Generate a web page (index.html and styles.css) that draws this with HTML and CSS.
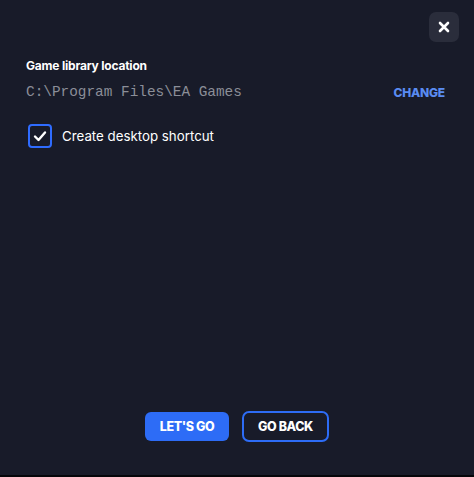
FILE: index.html
```html
<!DOCTYPE html>
<html lang="en">

<head>
  <title>Install options</title>
  <link rel="stylesheet" href="styles.css">
</head>

<body>
  <div class="dialog">
    <div class="top">
      <button class="close" aria-label="Close">
        <svg width="12" height="12" viewBox="0 0 12 12">
          <path d="M2 2 L10 10 M10 2 L2 10" stroke="#fff" stroke-width="2.6" stroke-linecap="round" />
        </svg>
      </button>
    </div>

    <div class="content">
      <div class="label">Game library location</div>
      <div class="location">
        <span class="path">C:\Program Files\EA Games</span>
        <a class="change" href="#">CHANGE</a>
      </div>

      <label class="option">
        <span class="checkbox">
          <svg width="16" height="16" viewBox="0 0 16 16">
            <path d="M3 8.5 L6.5 12 L13 4.5" fill="none" stroke="#fff" stroke-width="2.4" stroke-linecap="round" stroke-linejoin="round" />
          </svg>
        </span>
        <span>Create desktop shortcut</span>
      </label>
    </div>

    <div class="actions">
      <button class="btn primary">LET'S GO</button>
      <button class="btn outline">GO BACK</button>
    </div>
  </div>
  <div class="edge"></div>
</body>

</html>
```

FILE: styles.css
```css
html,
body {
  margin: 0;
  height: 100%;
}

body {
  background-color: #181b29;
  font-family: Inter, "Liberation Sans", sans-serif;
  color: #fff;
  display: flex;
  flex-direction: column;
}

.dialog {
  flex: 1;
  display: flex;
  flex-direction: column;
}

.top {
  display: flex;
  justify-content: flex-end;
  padding: 12px 15px 0 0;
}

.close {
  width: 30px;
  height: 30px;
  border: none;
  border-radius: 7px;
  background-color: #2a2d3b;
  display: flex;
  align-items: center;
  justify-content: center;
  padding: 0;
}

.content {
  padding: 16px 29px 0 26px;
  flex: 1;
}

.label {
  font-size: 12px;
  font-weight: 700;
  letter-spacing: -0.2px;
  line-height: 16px;
}

.location {
  display: flex;
  justify-content: space-between;
  align-items: center;
  margin-top: 10px;
}

.path {
  font-family: "Liberation Mono", monospace;
  font-size: 14.4px;
  color: #8b8e98;
}

.change {
  font-size: 12px;
  font-weight: 800;
  color: #5a8cf2;
  text-decoration: none;
  letter-spacing: -0.2px;
}

.option {
  display: flex;
  align-items: center;
  gap: 10px;
  margin-top: 24px;
  margin-left: 2px;
  font-size: 13.3px;
}

.checkbox {
  width: 20px;
  height: 20px;
  border: 2px solid #2f6cff;
  border-radius: 4px;
  display: flex;
  align-items: center;
  justify-content: center;
}

.actions {
  display: flex;
  justify-content: center;
  align-items: center;
  gap: 13px;
  padding-bottom: 33px;
}

.btn {
  font-family: Inter, "Liberation Sans", sans-serif;
  font-size: 12.5px;
  font-weight: 800;
  color: #fff;
  letter-spacing: -0.4px;
  cursor: pointer;
}

.primary {
  width: 84px;
  height: 29px;
  border: none;
  border-radius: 6px;
  background-color: #2d6cf6;
}

.outline {
  width: 87px;
  height: 31px;
  border: 2px solid #2d6cf6;
  border-radius: 7px;
  background-color: transparent;
}

.edge {
  height: 2px;
  background-color: #05060a;
}
```
